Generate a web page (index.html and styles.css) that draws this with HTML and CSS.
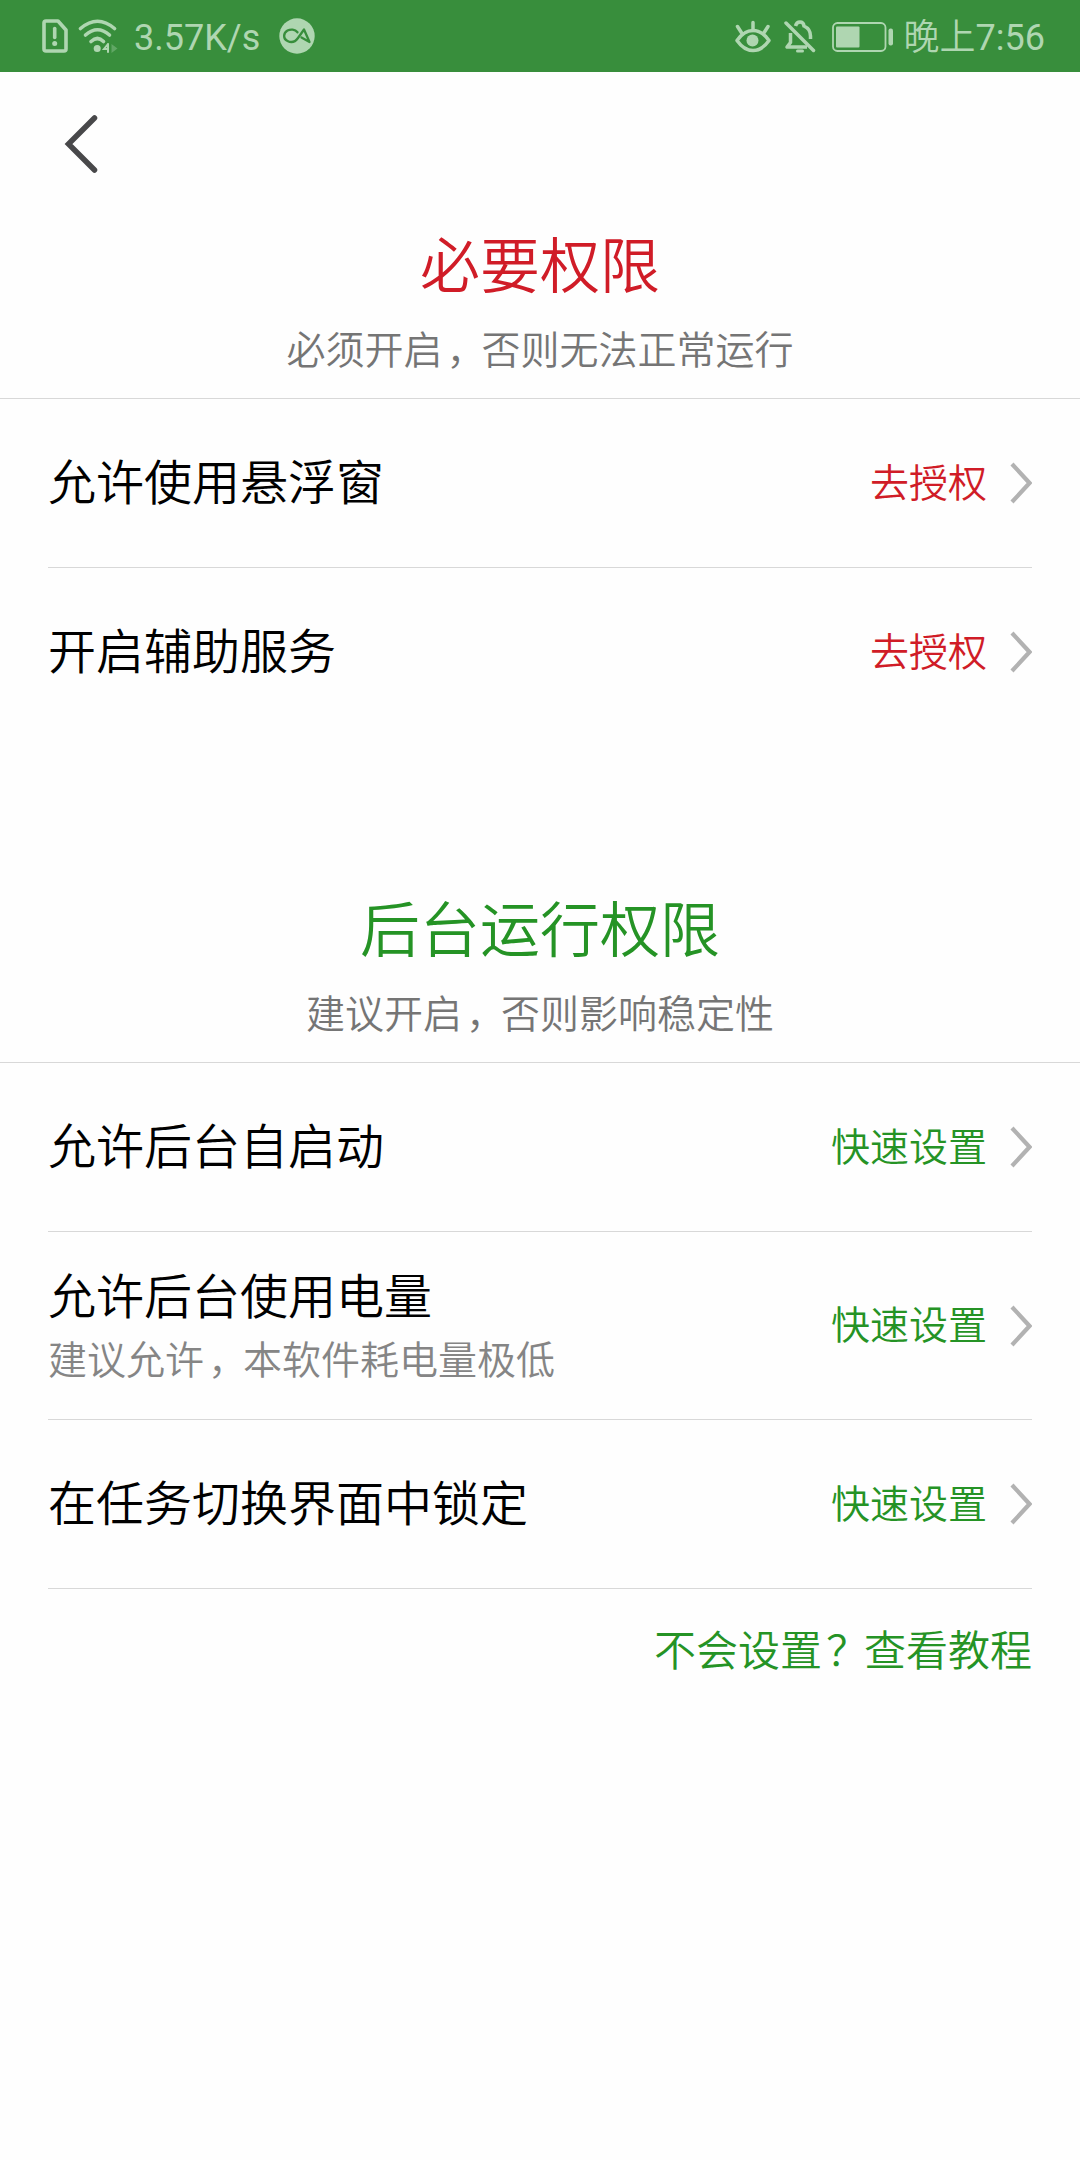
FILE: index.html
```html
<!DOCTYPE html>
<html lang="zh-CN">
<head>
<meta charset="utf-8">
<title>权限设置</title>
<link rel="stylesheet" href="styles.css">
</head>
<body>
<header class="status-bar">
  <div class="status-left">
    <svg class="icon-sim" width="26" height="34" viewBox="0 0 26 34" fill="none" stroke="currentColor" stroke-width="3.6" stroke-linejoin="round"><path d="M4 2h12l8 9v19a2 2 0 0 1-2 2H4a2 2 0 0 1-2-2V4a2 2 0 0 1 2-2z"/><path d="M12.700 9.500v9" stroke-linecap="round"/><circle cx="12.700" cy="24.500" r="2.500" fill="currentColor" stroke="none"/></svg>
    <svg class="icon-wifi" width="40" height="34" viewBox="0 0 40 34" fill="none" stroke="currentColor" stroke-width="3.600" stroke-linecap="round"><path d="M2.500 9.500Q19.500-5 36.500 9.500"/><path d="M7.500 16Q19.500 5.500 31.500 16"/><path d="M13 22.500Q19.500 16.500 25.500 22.500"/><circle cx="19.200" cy="29.500" r="3.500" fill="currentColor" stroke="none"/><path d="M30 25v8M30 25l-4 5h4" stroke-width="2"/><path d="M33.500 25l6 4.500-6 4.500z" fill="currentColor" stroke="none" opacity=".35"/></svg>
    <span class="net-speed">3.57K/s</span>
    <svg class="icon-app" width="36" height="36" viewBox="0 0 36 36"><circle cx="18" cy="18" r="17.700" fill="currentColor"/><path d="M18.500 14.300C16 11 11.500 11 8.500 12.500c-4.500 2.500-4.500 8.500 0 10.500 4 2 8 .5 10.500-3l6-8.500 5.500 12.500-8-4.500" fill="none" stroke="#388e3c" stroke-width="2.300" stroke-linejoin="round" stroke-linecap="round"/></svg>
  </div>
  <div class="status-right">
    <svg class="icon-eye" width="36" height="33" viewBox="0 0 36 33" fill="none" stroke="currentColor" stroke-width="3.500" stroke-linecap="round"><path d="M2 20.500Q9 10.500 18 10.500t16 10Q27 30.500 18 30.500T2 20.500z" stroke-linejoin="round"/><circle cx="17.500" cy="20.500" r="6" fill="currentColor" stroke="none"/><path d="M18 2.500v8M2.500 6.500l4.500 7M33 6.500l-4.500 7"/></svg>
    <svg class="icon-bell" width="32" height="34" viewBox="0 0 32 34" fill="none" stroke="currentColor" stroke-width="3.500"><path d="M2 3L29.500 30.500" stroke-linecap="round"/><path d="M6.500 13v9.500L3 27h20" stroke-linejoin="round"/><path d="M11.500 6Q12.500 2 16 2t4 4Q26.500 9 26.500 16v3"/><path d="M13.500 31h5" stroke-linecap="round" stroke-width="3"/></svg>
    <svg class="icon-battery" width="62" height="30" viewBox="0 0 62 30"><rect x="1" y="1" width="52.500" height="28" rx="4.500" fill="none" stroke="currentColor" stroke-width="1.800"/><rect x="4" y="4.500" width="23.500" height="21" rx="1" fill="currentColor"/><rect x="56.500" y="6.500" width="4.500" height="17" rx="2" fill="currentColor"/></svg>
    <span class="clock"><span class="period">晚上</span>7:56</span>
  </div>
</header>

<nav class="toolbar">
  <svg class="icon-back" width="34" height="58" viewBox="0 0 34 58" fill="none" stroke="currentColor" stroke-width="5.500" stroke-linecap="round"><path d="M30.500 3L4.500 29l26 26"/></svg>
</nav>

<main>
  <section class="group required">
    <div class="group-head">
      <h2>必要权限</h2>
      <p>必须开启<span class="punct">，</span>否则无法正常运行</p>
    </div>
    <ul>
      <li class="row"><div class="label">允许使用悬浮窗</div><span class="action">去授权</span><svg class="chevron" viewBox="0 0 22 42"><path d="M2 2l17.500 19L2 40"/></svg></li>
      <li class="row"><div class="label">开启辅助服务</div><span class="action">去授权</span><svg class="chevron" viewBox="0 0 22 42"><path d="M2 2l17.500 19L2 40"/></svg></li>
    </ul>
  </section>

  <section class="group background">
    <div class="group-head">
      <h2>后台运行权限</h2>
      <p>建议开启<span class="punct">，</span>否则影响稳定性</p>
    </div>
    <ul>
      <li class="row"><div class="label">允许后台自启动</div><span class="action">快速设置</span><svg class="chevron" viewBox="0 0 22 42"><path d="M2 2l17.500 19L2 40"/></svg></li>
      <li class="row tall"><div class="label">允许后台使用电量<small>建议允许<span class="punct">，</span>本软件耗电量极低</small></div><span class="action">快速设置</span><svg class="chevron" viewBox="0 0 22 42"><path d="M2 2l17.500 19L2 40"/></svg></li>
      <li class="row"><div class="label">在任务切换界面中锁定</div><span class="action">快速设置</span><svg class="chevron" viewBox="0 0 22 42"><path d="M2 2l17.500 19L2 40"/></svg></li>
    </ul>
    <a class="tutorial">不会设置<span class="punct">？</span>查看教程</a>
  </section>
</main>
</body>
</html>
```
FILE: styles.css
```css
* {
  box-sizing: border-box;
}

body {
  margin: 0;
  min-height: 2160px;
  background: #fefefe;
  color: #000;
  font-family: "Noto Sans CJK SC", sans-serif;
  font-weight: 350;
}

h2, p, ul {
  margin: 0;
  padding: 0;
  font-weight: 350;
  list-style: none;
}

svg {
  display: block;
  flex: none;
}

.status-bar {
  display: flex;
  justify-content: space-between;
  height: 72px;
  padding: 0 35px 0 42px;
  background: #388e3c;
  color: #afd6b1;
  font: 400 36px/72px Roboto, "Noto Sans CJK SC", sans-serif;
}

.status-left,
.status-right {
  display: flex;
  align-items: center;
}

.icon-wifi {
  margin-left: 10px;
}

.net-speed {
  width: 126px;
  margin: 3px 0 0 16px;
}

.icon-app {
  margin-left: 19px;
}

.icon-eye,
.icon-bell,
.icon-battery {
  margin-top: 1px;
}

.icon-bell {
  margin-left: 13px;
}

.icon-battery {
  margin-left: 16px;
  margin-right: 10px;
}

.clock {
  margin-top: 3px;
}

.period {
  font-weight: 350;
}

.toolbar {
  display: flex;
  align-items: center;
  height: 144px;
  padding-left: 64px;
  color: #48484a;
}

.group-head {
  height: 183px;
  padding-top: 2px;
  border-bottom: 1px solid #d8d8d8;
  text-align: center;
}

.group-head h2 {
  font-size: 60px;
  line-height: 88px;
}

.group-head p {
  padding-top: 12px;
  color: #757575;
  font-size: 39px;
  line-height: 58px;
}

.punct {
  display: inline-block;
  width: 1em;
  text-align: left;
  text-indent: 0.1em;
  white-space: nowrap;
}

.required h2,
.required .action {
  color: #d01c27;
}

.background h2,
.background .action,
.tutorial {
  color: #259325;
}

.background {
  padding-top: 144px;
}

.row {
  display: flex;
  align-items: center;
  height: 169px;
  margin: 0 48px;
  border-bottom: 1px solid #d8d8d8;
}

.required .row:last-child {
  height: 168px;
  border-bottom: 0;
}

.row.tall {
  height: 188px;
}

.label {
  flex: 1;
  padding-bottom: 8px;
  font-size: 48px;
  line-height: 70px;
}

.label small {
  display: block;
  color: #858585;
  font-size: 39px;
  line-height: 58px;
}

.action {
  padding-bottom: 7px;
  font-size: 39px;
  line-height: 58px;
}

.chevron {
  width: 22px;
  height: 42px;
  margin-left: 23px;
  fill: none;
  stroke: #b2b2b2;
  stroke-width: 4.2;
}

.tutorial {
  display: block;
  padding: 28px 48px 0;
  font-size: 42px;
  line-height: 62px;
  text-align: right;
}
```
